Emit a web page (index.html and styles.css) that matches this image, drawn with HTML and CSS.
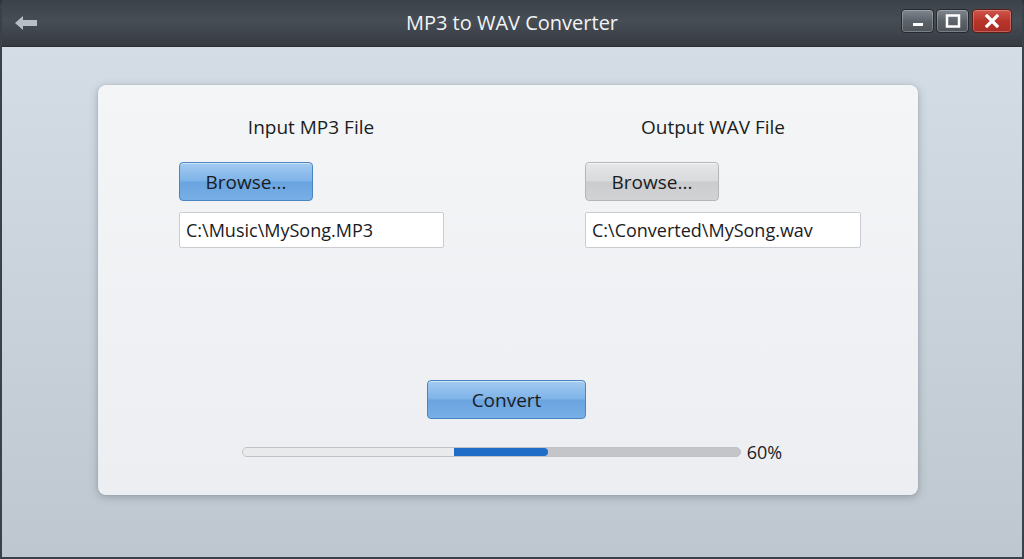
FILE: index.html
```html
<!DOCTYPE html>
<html lang="en">
<head>
    <meta charset="UTF-8">
    <meta name="viewport" content="width=device-width, initial-scale=1.0">
    <title>MP3 to WAV Converter</title>
    <link rel="stylesheet" href="styles.css">
</head>
<body>
    <div class="window">
        <div class="titlebar">
            <button class="back" aria-label="Back">
                <svg width="24" height="16" viewBox="0 0 24 16">
                    <path d="M1 8 L9 1 L9 5 L23 5 L23 11 L9 11 L9 15 Z" fill="#b7bec6"/>
                </svg>
            </button>
            <div class="title">MP3 to WAV Converter</div>
            <div class="controls">
                <button class="ctl">
                    <svg width="14" height="14" viewBox="0 0 14 14"><rect x="2" y="9" width="10" height="3" fill="#fff"/></svg>
                </button>
                <button class="ctl">
                    <svg width="16" height="14" viewBox="0 0 16 14"><rect x="2" y="1.5" width="12" height="11" fill="none" stroke="#fff" stroke-width="2.5"/></svg>
                </button>
                <button class="ctl close">
                    <svg width="16" height="14" viewBox="0 0 16 14"><path d="M3 2 L13 12 M13 2 L3 12" stroke="#fff" stroke-width="3.2" stroke-linecap="square"/></svg>
                </button>
            </div>
        </div>
        <div class="client">
            <div class="panel">
                <div class="columns">
                    <div class="col">
                        <h2>Input MP3 File</h2>
                        <button class="btn blue">Browse...</button>
                        <input type="text" class="path" value="C:\Music\MySong.MP3">
                    </div>
                    <div class="col right">
                        <h2>Output WAV File</h2>
                        <button class="btn gray">Browse...</button>
                        <input type="text" class="path" value="C:\Converted\MySong.wav">
                    </div>
                </div>
                <div class="actions">
                    <button class="btn blue convert">Convert</button>
                    <div class="progress-row">
                        <div class="progress"><div class="done"></div><div class="fill"></div></div>
                        <span class="pct">60%</span>
                    </div>
                </div>
            </div>
        </div>
    </div>
</body>
</html>
```

FILE: styles.css
```css
body {
    margin: 0;
    width: 1024px;
    height: 559px;
    overflow: hidden;
    font-family: "Open Sans", "Noto Sans", sans-serif;
    background: #2f343a;
}

.window {
    box-sizing: border-box;
    width: 1024px;
    height: 559px;
    border: 2px solid #3b4148;
    border-top: none;
    border-radius: 6px 6px 0 0;
    display: flex;
    flex-direction: column;
    background: #3a4047;
}

.titlebar {
    height: 46px;
    display: flex;
    align-items: center;
    position: relative;
    background: linear-gradient(#3c424a, #474d55 45%, #363b42);
    border-bottom: 1px solid #2a2e33;
}

.back {
    background: none;
    border: none;
    padding: 0;
    margin-left: 12px;
    display: flex;
}

.title {
    position: absolute;
    left: 0;
    right: 0;
    text-align: center;
    color: #f2f4f6;
    font-size: 20px;
    top: 9px;
    pointer-events: none;
}

.controls {
    margin-left: auto;
    margin-right: 10px;
    margin-top: -4px;
    display: flex;
    gap: 2px;
}

.ctl {
    width: 33px;
    height: 24px;
    padding: 0;
    border: 1px solid #25292e;
    border-radius: 4px;
    background: linear-gradient(#80868d, #5d636a 50%, #4d5359);
    box-shadow: inset 0 0 0 1px rgba(255, 255, 255, 0.25);
    display: flex;
    align-items: center;
    justify-content: center;
}

.ctl.close {
    width: 40px;
    margin-left: 1px;
    background: linear-gradient(#d0564b, #b8352b 50%, #a82c24);
    border-color: #5e1c17;
}

.client {
    flex: 1;
    background: linear-gradient(#d4dde5, #c7d0d8 60%, #bec7cf);
    padding: 38px 104px 62px 96px;
}

.panel {
    height: 410px;
    box-sizing: border-box;
    background: linear-gradient(#f3f5f7, #eceef1);
    border-radius: 8px;
    box-shadow: 0 2px 8px rgba(60, 70, 80, 0.35), 0 0 1px rgba(0, 0, 0, 0.3);
    padding: 29px 0 0 81px;
    display: flex;
    flex-direction: column;
}

.columns {
    display: flex;
}

.col {
    width: 406px;
    display: flex;
    flex-direction: column;
    align-items: flex-start;
}

.col.right {
    width: auto;
}

.col h2 {
    width: 264px;
    margin: 0 0 22px;
    font-size: 19px;
    font-weight: normal;
    line-height: 26px;
    text-align: center;
    color: #1b1d20;
}

.col.right h2 {
    width: 256px;
}

.btn {
    height: 39px;
    width: 134px;
    border-radius: 4px;
    font-family: inherit;
    font-size: 19px;
    color: #1a1c1f;
    padding: 0;
    cursor: pointer;
}

.btn.blue {
    border: 1px solid #4a84c2;
    background: linear-gradient(#a3cbf1, #7fb3e8 48%, #6aa4e0 52%, #78afe6);
    box-shadow: inset 0 1px 0 rgba(255, 255, 255, 0.5);
}

.btn.gray {
    border: 1px solid #b3b5b8;
    background: linear-gradient(#e6e7e8, #d9dadb 48%, #cbcccd 52%, #d2d3d4);
    box-shadow: inset 0 1px 0 rgba(255, 255, 255, 0.6);
}

.path {
    margin-top: 11px;
    box-sizing: border-box;
    width: 265px;
    height: 36px;
    border: 1px solid #c9cdd1;
    border-radius: 2px;
    background: #fff;
    font-family: inherit;
    font-size: 18px;
    color: #1a1c1f;
    padding: 0 6px;
}

.col.right .path {
    width: 276px;
}

.actions {
    margin-left: -81px;
    display: flex;
    flex-direction: column;
    align-items: center;
    padding-top: 132px;
}

.convert {
    width: 159px;
    margin-left: -3px;
}

.progress-row {
    margin-top: 21px;
    display: flex;
    align-items: center;
    gap: 6px;
    margin-left: 8px;
}

.progress {
    width: 499px;
    height: 10px;
    border-radius: 5px;
    background: #c3c5c8;
    border: 1px solid #c0c2c5;
    box-sizing: border-box;
    display: flex;
    overflow: hidden;
}

.progress .done {
    width: 211px;
    background: #e9eaec;
}

.progress .fill {
    width: 94px;
    background: #1f6dc6;
    border-radius: 0 5px 5px 0;
}

.pct {
    font-size: 18px;
    color: #1a1c1f;
}
```
